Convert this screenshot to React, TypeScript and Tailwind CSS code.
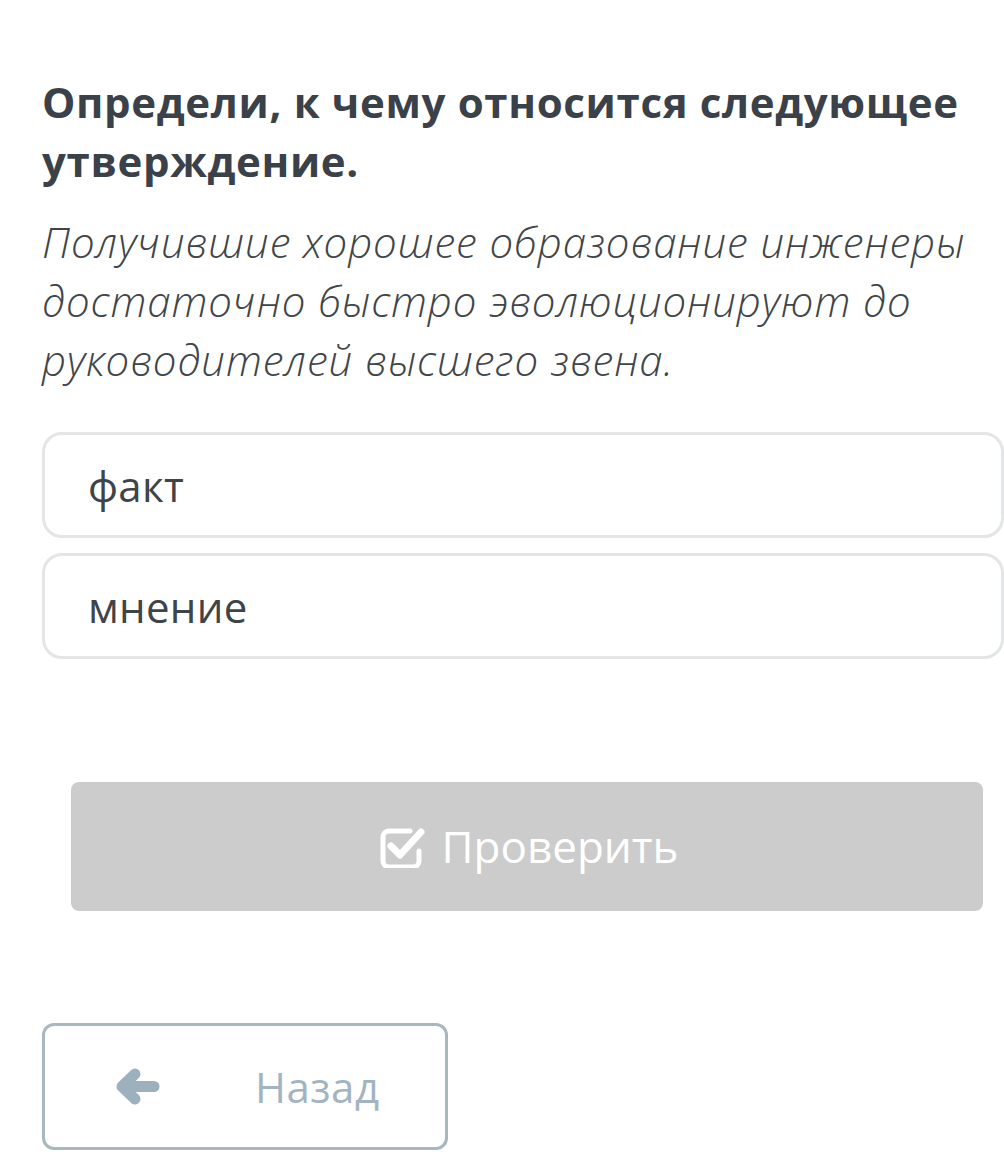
import React from "react";

export default function App() {
  const font = { fontFamily: '"Open Sans", "Noto Sans", sans-serif' };
  return (
    <div className="w-[1004px] h-[1165px] bg-white overflow-hidden" style={font}>
      <div className="pl-[42px] pt-[72px]">
        <h1 className="text-[42px] leading-[59px] font-bold text-[#3b4149] tracking-[0.65px]">
          Определи, к чему относится следующее
          <br />
          утверждение.
        </h1>
        <p className="mt-[22px] text-[42px] leading-[59px] italic font-[350] text-[#404549] tracking-[0.9px]">
          Получившие хорошее образование инженеры
          <br />
          достаточно быстро эволюционируют до
          <br />
          руководителей высшего звена.
        </p>
        <div className="mt-[43px] flex flex-col gap-[15px]">
          {["факт", "мнение"].map((t) => (
            <div
              key={t}
              className="w-[962px] h-[106px] border-[3px] border-[#e3e5e6] rounded-[20px] flex items-center pl-[43px] text-[42px] text-[#3f4448] tracking-[0.3px]"
            >
              {t}
            </div>
          ))}
        </div>
        <div className="mt-[123px] ml-[29px] w-[912px] h-[129px] bg-[#cccccc] rounded-[8px] flex items-center justify-center gap-[16px] text-white text-[44px]">
          <svg width="46" height="42" viewBox="0 0 46 42" fill="none" className="ml-[4px]">
            <path
              d="M30 5 H9 a6 6 0 0 0 -6 6 v24 a6 6 0 0 0 6 6 h24 a6 6 0 0 0 6 -6 v-10"
              stroke="white"
              strokeWidth="5"
              strokeLinecap="round"
              strokeLinejoin="round"
            />
            <path
              d="M11 20 L20 29 L41 6"
              stroke="white"
              strokeWidth="7"
              strokeLinecap="round"
              strokeLinejoin="round"
            />
          </svg>
          <span className="leading-none -mt-[2px]">Проверить</span>
        </div>
        <div className="mt-[112px] w-[406px] h-[127px] border-[3px] border-[#a9b7c1] rounded-[12px] flex items-center">
          <svg width="45" height="37" viewBox="0 0 45 37" fill="none" className="ml-[70px]">
            <path d="M10 18.5 H39" stroke="#9db0be" strokeWidth="11" strokeLinecap="round" />
            <path
              d="M20 6 L7 18.5 L20 31"
              stroke="#9db0be"
              strokeWidth="11"
              strokeLinecap="round"
              strokeLinejoin="round"
            />
          </svg>
          <span className="ml-[95px] text-[42px] text-[#a3b4c1] tracking-[0.5px]">Назад</span>
        </div>
      </div>
    </div>
  );
}
